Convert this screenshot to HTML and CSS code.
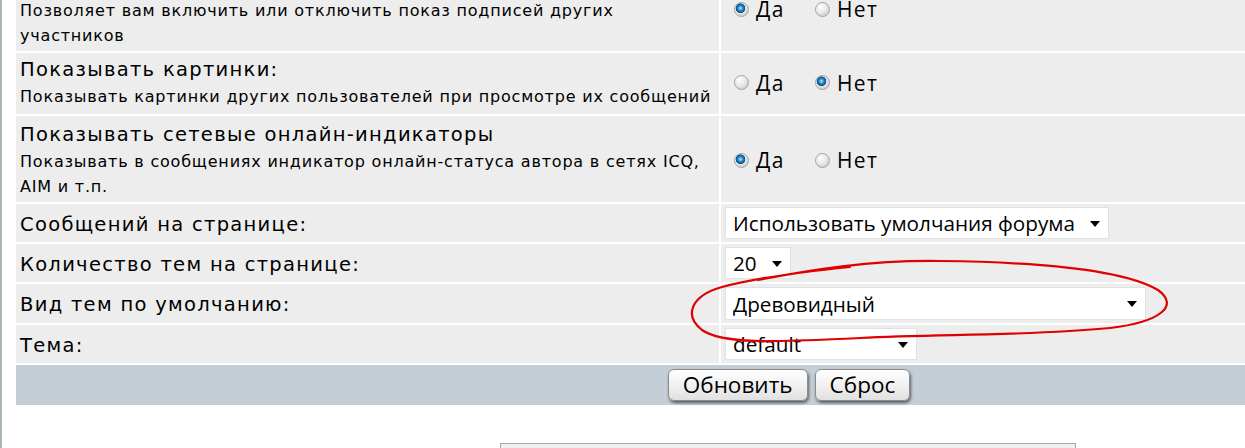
FILE: index.html
```html
<!DOCTYPE html>
<html lang="ru">
<head>
  <meta charset="UTF-8">
  <title>Настройки отображения</title>
  <link rel="stylesheet" href="styles.css">
</head>
<body>
<div class="page">
  <table class="prefs">
    <tr class="tall">
      <td class="label">
        <div class="title">Показывать подписи:</div>
        <div class="hint">Позволяет вам включить или отключить показ подписей других<br>участников</div>
      </td>
      <td class="field">
        <label class="radio"><input type="radio" name="sig" checked>Да</label>
        <label class="radio"><input type="radio" name="sig">Нет</label>
      </td>
    </tr>
    <tr class="mid">
      <td class="label">
        <div class="title">Показывать картинки:</div>
        <div class="hint">Показывать картинки других пользователей при просмотре их сообщений</div>
      </td>
      <td class="field">
        <label class="radio"><input type="radio" name="img">Да</label>
        <label class="radio"><input type="radio" name="img" checked>Нет</label>
      </td>
    </tr>
    <tr class="tall">
      <td class="label">
        <div class="title">Показывать сетевые онлайн-индикаторы</div>
        <div class="hint">Показывать в сообщениях индикатор онлайн-статуса автора в сетях ICQ,<br>AIM и т.п.</div>
      </td>
      <td class="field">
        <label class="radio"><input type="radio" name="online" checked>Да</label>
        <label class="radio"><input type="radio" name="online">Нет</label>
      </td>
    </tr>
    <tr class="short">
      <td class="label"><div class="title">Сообщений на странице:</div></td>
      <td class="field">
        <span class="select w-posts"><select><option>Использовать умолчания форума</option></select></span>
      </td>
    </tr>
    <tr class="short">
      <td class="label"><div class="title">Количество тем на странице:</div></td>
      <td class="field">
        <span class="select w-topics"><select><option>20</option></select></span>
      </td>
    </tr>
    <tr class="short view-row">
      <td class="label"><div class="title">Вид тем по умолчанию:</div></td>
      <td class="field">
        <span class="select w-view"><select><option>Древовидный</option></select></span>
      </td>
    </tr>
    <tr class="short">
      <td class="label"><div class="title">Тема:</div></td>
      <td class="field">
        <span class="select w-theme"><select><option>default</option></select></span>
      </td>
    </tr>
    <tr>
      <td class="footer" colspan="2">
        <button class="btn">Обновить</button>
        <button class="btn">Сброс</button>
      </td>
    </tr>
  </table>

  <div class="next-box"></div>

  <!-- пометка от руки -->
  <svg class="scribble" width="1245" height="448" viewBox="0 0 1245 448">
    <path d="M758 280 C 810 270, 870 260, 940 261 C 1030 262, 1120 268, 1158 290 C 1180 306, 1160 322, 1110 328 C 1030 336, 940 334, 860 338 C 790 341, 725 346, 702 330 C 684 316, 690 296, 722 287 C 752 279, 800 272, 850 267"
          fill="none" stroke="#e00000" stroke-width="2.2" stroke-linecap="round"/>
  </svg>
</div>
</body>
</html>
```

FILE: styles.css
```css
* { box-sizing: border-box; }
html, body { margin: 0; padding: 0; background: #fff; }
body {
  font-family: "DejaVu Sans", Verdana, sans-serif;
  color: #000;
  overflow: hidden;
}
.page {
  position: relative;
  border-left: 2px solid #a9b4b9;
  padding-left: 12px;
  margin-top: -37px;
  height: calc(100vh + 37px);
}
.prefs {
  width: 1550px;
  border-collapse: separate;
  border-spacing: 2px;
}
.prefs td {
  background: #ededed;
  vertical-align: middle;
}
.label { width: 703px; padding: 0 4px; }
.field { padding: 0 4px; }
.title { font-size: 19.5px; letter-spacing: 1.3px; line-height: 28px; }
.hint { font-size: 16px; letter-spacing: 0.8px; line-height: 25px; }
.tall td { height: 86px; padding-top: 3px; padding-bottom: 1px; }
.mid td { height: 61px; padding-bottom: 2px; }
.short td { height: 38px; }
.short .title { padding-top: 3px; }
.view-row td { height: 39px; }

.radio {
  font-family: "Open Sans", sans-serif;
  font-size: 21px;
  letter-spacing: 1.4px;
  display: inline-flex;
  align-items: center;
  margin-right: 16px;
}
.radio input {
  appearance: none;
  -webkit-appearance: none;
  width: 15px;
  height: 15px;
  margin: 0 7px 0 9px;
  border-radius: 50%;
  border: 1px solid #a4a4a4;
  background: radial-gradient(circle at 35% 30%, #fff 0%, #e6e6e6 50%, #bdbdbd 100%);
}
.radio input:checked {
  background:
    radial-gradient(circle at 42% 40%, #bfe6ff 0, #2a8ccc 22%, #0a4f86 42%, transparent 47%),
    radial-gradient(circle at 35% 30%, #fff 0%, #e6e6e6 50%, #bdbdbd 100%);
}

.select {
  position: relative;
  display: inline-block;
  vertical-align: middle;
}
.select select {
  appearance: none;
  -webkit-appearance: none;
  width: 100%;
  height: 32px;
  font-family: "Open Sans", sans-serif;
  font-size: 20.7px;
  color: #000;
  background: #fff;
  border: 1px solid #e2e2e2;
  border-radius: 0;
  padding: 0 24px 0 7px;
}
.select::after {
  content: "";
  position: absolute;
  right: 9px;
  top: 14px;
  border-left: 5px solid transparent;
  border-right: 5px solid transparent;
  border-top: 6px solid #000;
  pointer-events: none;
}
.w-posts { width: 384px; }
.w-topics { width: 66px; }
.w-view { width: 421px; height: 33px; }
.w-view select { height: 33px; }
.w-theme { width: 192px; }

.footer {
  height: 40px;
  text-align: center;
  background: #c4ced6 !important;
  padding: 0;
}
.btn {
  font-family: "Open Sans", sans-serif;
  font-size: 22.5px;
  height: 32px;
  padding: 0 14px;
  margin: 0 1px;
  border: 1px solid #8c8c8c;
  border-radius: 6px;
  background: linear-gradient(#ffffff, #f1f1f1 50%, #e0e0e0);
  box-shadow: 1px 2px 3px rgba(0, 0, 0, 0.55);
  color: #000;
  line-height: 28px;
  vertical-align: middle;
}

.next-box {
  width: 576px;
  height: 40px;
  margin: 36px 0 0 486px;
  border: 1px solid #a8a8a8;
  background: #eef1f2;
}

.scribble {
  position: absolute;
  left: -2px;
  top: 37px;
  pointer-events: none;
}
```
